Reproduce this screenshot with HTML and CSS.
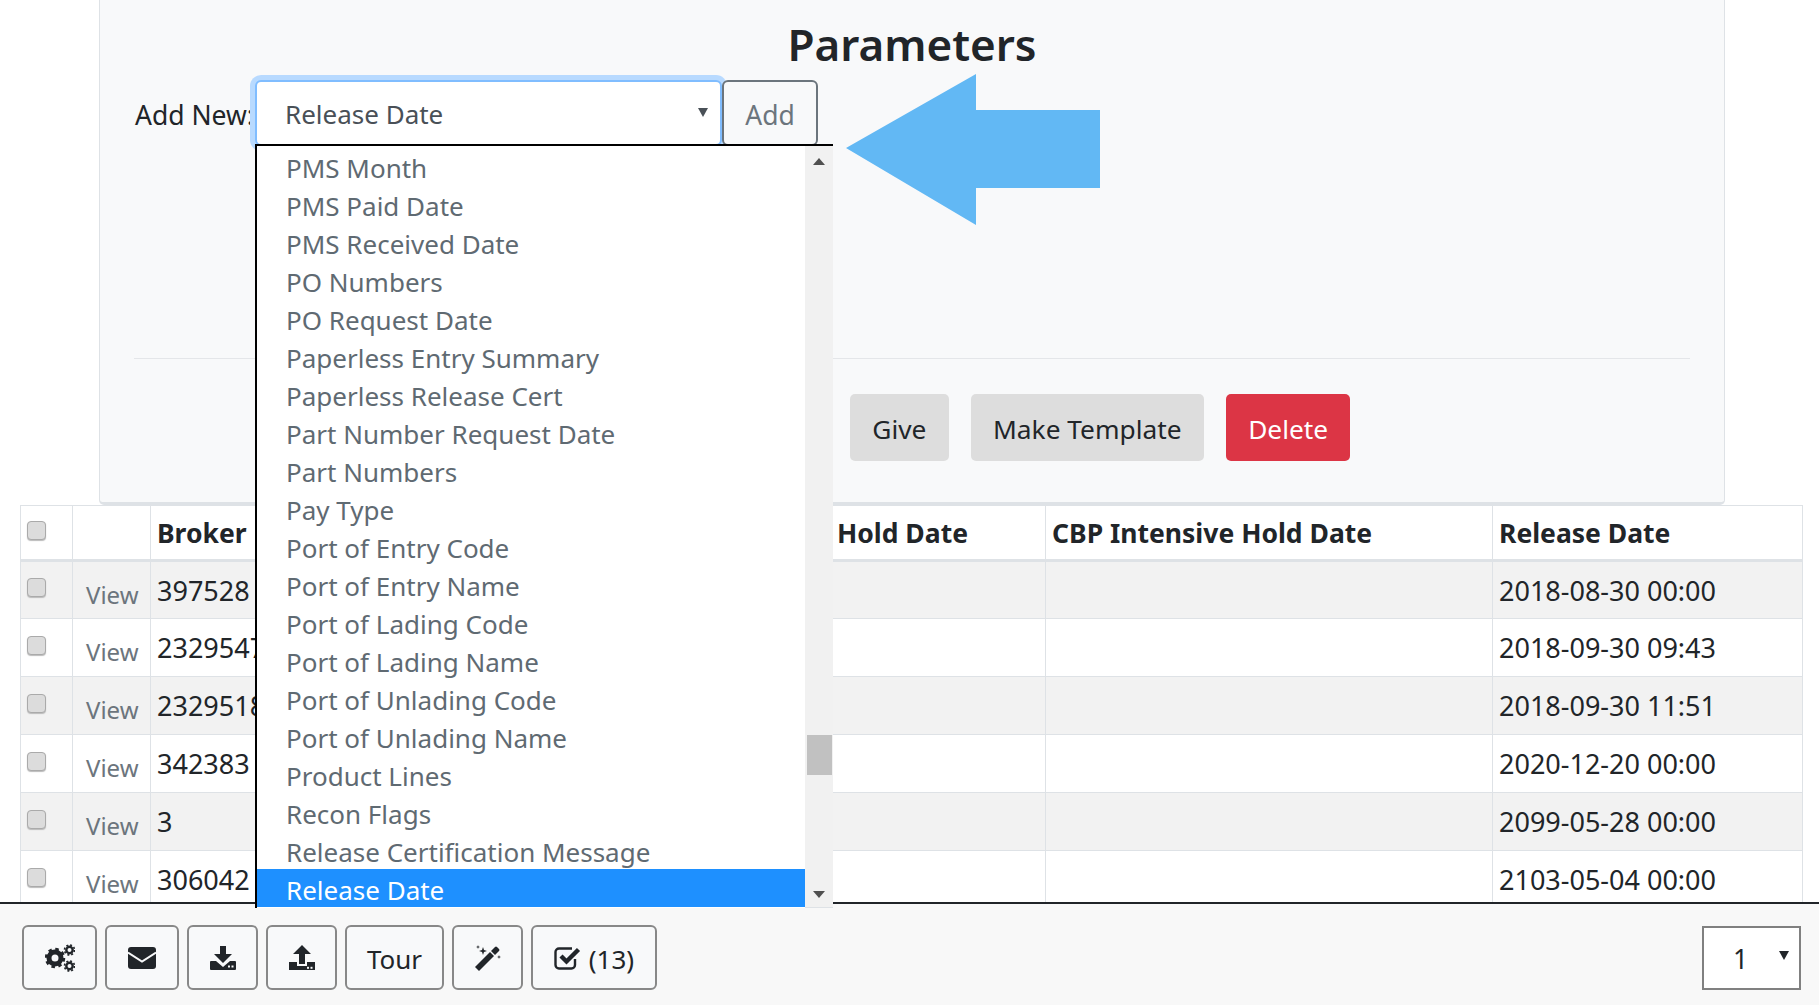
FILE: index.html
```html
<!DOCTYPE html>
<html>
<head>
<meta charset="UTF-8">
<title>Parameters</title>
<link rel="stylesheet" href="styles.css">
</head>
<body>
<div class="page">
  <div class="content">
    <div class="panel">
      <h2 class="panel-title">Parameters</h2>
      <div class="add-row">
        <label class="add-label">Add New:</label>
        <div class="select-box">Release Date<span class="select-arrow"></span></div>
        <button class="btn-add">Add</button>
      </div>
      <hr class="rule">
      <div class="actions">
        <button class="btn btn-grey">Give</button>
        <button class="btn btn-grey">Make Template</button>
        <button class="btn btn-red">Delete</button>
      </div>
    </div>

    <table class="grid">
      <colgroup>
        <col class="c-check"><col class="c-view"><col class="c-broker"><col class="c-hold"><col class="c-cbp"><col class="c-release">
      </colgroup>
      <thead>
        <tr>
          <th><input type="checkbox" class="tick"></th>
          <th></th>
          <th>Broker Reference</th>
          <th>Hold Date</th>
          <th>CBP Intensive Hold Date</th>
          <th>Release Date</th>
        </tr>
      </thead>
      <tbody>
        <tr><td><input type="checkbox" class="tick"></td><td class="view">View</td><td>397528</td><td></td><td></td><td>2018-08-30 00:00</td></tr>
        <tr><td><input type="checkbox" class="tick"></td><td class="view">View</td><td>2329547</td><td></td><td></td><td>2018-09-30 09:43</td></tr>
        <tr><td><input type="checkbox" class="tick"></td><td class="view">View</td><td>2329518</td><td></td><td></td><td>2018-09-30 11:51</td></tr>
        <tr><td><input type="checkbox" class="tick"></td><td class="view">View</td><td>342383</td><td></td><td></td><td>2020-12-20 00:00</td></tr>
        <tr><td><input type="checkbox" class="tick"></td><td class="view">View</td><td>3</td><td></td><td></td><td>2099-05-28 00:00</td></tr>
        <tr><td><input type="checkbox" class="tick"></td><td class="view">View</td><td>306042</td><td></td><td></td><td>2103-05-04 00:00</td></tr>
      </tbody>
    </table>
  </div>

  <div class="footer">
    <div class="tools">
      <button class="tool tool-gears">
        <svg width="30" height="28" viewBox="0 0 30 28">
          <circle cx="10" cy="14" r="6" fill="none" stroke="#212529" stroke-width="5"/>
          <circle cx="10" cy="14" r="9" fill="none" stroke="#212529" stroke-width="2.5" stroke-dasharray="3.5 3.57"/>
          <circle cx="24.5" cy="6" r="3.2" fill="none" stroke="#212529" stroke-width="2.4"/>
          <circle cx="24.5" cy="6" r="5" fill="none" stroke="#212529" stroke-width="1.6" stroke-dasharray="2 1.93"/>
          <circle cx="24.5" cy="22" r="3.2" fill="none" stroke="#212529" stroke-width="2.4"/>
          <circle cx="24.5" cy="22" r="5" fill="none" stroke="#212529" stroke-width="1.6" stroke-dasharray="2 1.93"/>
        </svg>
      </button>
      <button class="tool tool-mail">
        <svg width="28" height="22" viewBox="0 0 28 22">
          <rect width="28" height="22" rx="3" fill="#212529"/>
          <path d="M0 5.5 L14 14.5 L28 5.5" fill="none" stroke="#f8f9fa" stroke-width="2"/>
        </svg>
      </button>
      <button class="tool tool-down">
        <svg width="26" height="24" viewBox="0 0 26 24">
          <path d="M10 0 H16 V8 H22 L13 17 L4 8 H10 Z" fill="#212529"/>
          <path d="M1 15 H6 L13 21 L20 15 H25 A1 1 0 0 1 26 16 V23 A1 1 0 0 1 25 24 H1 A1 1 0 0 1 0 23 V16 A1 1 0 0 1 1 15 Z" fill="#212529"/>
          <rect x="18" y="19.5" width="2" height="2" fill="#f8f9fa"/><rect x="21.5" y="19.5" width="2" height="2" fill="#f8f9fa"/>
        </svg>
      </button>
      <button class="tool tool-up">
        <svg width="26" height="25" viewBox="0 0 26 25">
          <path d="M13 0 L22 9 H16 V19 H10 V9 H4 Z" fill="#212529"/>
          <path d="M0 17 H8 V21 H18 V17 H26 V25 H0 Z" fill="#212529"/>
          <rect x="18" y="21.8" width="2" height="2" fill="#f8f9fa"/><rect x="21.5" y="21.8" width="2" height="2" fill="#f8f9fa"/>
        </svg>
      </button>
      <button class="tool tool-tour">Tour</button>
      <button class="tool tool-magic">
        <svg width="26" height="26" viewBox="0 0 26 26">
          <path d="M0 22 L15 7 L19 11 L4 26 Z" fill="#212529"/>
          <path d="M16 6 L20 2 Q21 1 22 2 L24 4 Q25 5 24 6 L20 10 Z" fill="#212529"/>
          <path d="M8 2 L9 5 L12 6 L9 7 L8 10 L7 7 L4 6 L7 5 Z" fill="#212529"/>
          <path d="M3 0 L3.5 1.5 L5 2 L3.5 2.5 L3 4 L2.5 2.5 L1 2 L2.5 1.5 Z" fill="#212529"/>
          <path d="M24 10 L24.5 11.5 L26 12 L24.5 12.5 L24 14 L23.5 12.5 L22 12 L23.5 11.5 Z" fill="#212529"/>
        </svg>
      </button>
      <button class="tool tool-count">
        <svg width="27" height="24" viewBox="0 0 27 24">
          <path d="M21 13 V19 A3.5 3.5 0 0 1 17.5 22.5 H5 A3.5 3.5 0 0 1 1.5 19 V6 A3.5 3.5 0 0 1 5 2.5 H18" fill="none" stroke="#212529" stroke-width="2.4"/>
          <path d="M7 10 L12.5 15.5 L24.5 3.5" fill="none" stroke="#212529" stroke-width="4.4"/>
        </svg>
        <span class="count-text">(13)</span>
      </button>
    </div>
    <div class="pager">1<span class="pager-arrow"></span></div>
  </div>

  <div class="dropdown">
    <div class="dropdown-list">
      <div class="opt">PMS Month</div>
      <div class="opt">PMS Paid Date</div>
      <div class="opt">PMS Received Date</div>
      <div class="opt">PO Numbers</div>
      <div class="opt">PO Request Date</div>
      <div class="opt">Paperless Entry Summary</div>
      <div class="opt">Paperless Release Cert</div>
      <div class="opt">Part Number Request Date</div>
      <div class="opt">Part Numbers</div>
      <div class="opt">Pay Type</div>
      <div class="opt">Port of Entry Code</div>
      <div class="opt">Port of Entry Name</div>
      <div class="opt">Port of Lading Code</div>
      <div class="opt">Port of Lading Name</div>
      <div class="opt">Port of Unlading Code</div>
      <div class="opt">Port of Unlading Name</div>
      <div class="opt">Product Lines</div>
      <div class="opt">Recon Flags</div>
      <div class="opt">Release Certification Message</div>
      <div class="opt opt-on">Release Date</div>
    </div>
    <div class="scrollbar">
      <span class="scroll-up"></span>
      <span class="scroll-thumb"></span>
      <span class="scroll-down"></span>
    </div>
  </div>

  <svg class="big-arrow" width="254" height="151" viewBox="0 0 254 151">
    <polygon points="0,74 130,0 130,36 254,36 254,114 130,114 130,151" fill="#62b8f4"/>
  </svg>
</div>
</body>
</html>
```

FILE: styles.css
```css
html, body {margin: 0; height: 100%;}
body {font-family: "Noto Sans", sans-serif; font-size: 26.5px; color: #212529; overflow: hidden;}
button {font-family: inherit; font-size: inherit;}

.page {position: relative; display: flex; flex-direction: column; height: 100vh;}
.content {flex: none; box-sizing: border-box; height: 904px; overflow: hidden; border-bottom: 2px solid #212529;}

/* le panneau du haut */
.panel {box-sizing: border-box; width: 1626px; height: 505px; margin-left: 99px; padding: 0 34px; background: #f8f9fa; border: 1px solid #dee2e6; border-top: 0; border-bottom-width: 3px; border-radius: 0 0 5px 5px;}
.panel-title {margin: 0; height: 80px; line-height: 88px; text-align: center; font-size: 44px; font-weight: 600;}
.add-row {display: flex; align-items: center; height: 66px;}
.add-label {flex: none; box-sizing: border-box; width: 121px; padding: 4px 0 0 1px; white-space: nowrap;}
.select-box {position: relative; box-sizing: border-box; width: 467px; height: 66px; line-height: 65px; padding-left: 28px; font-size: 26px; background: #fff; color: #495057; border: 2px solid #80bdff; border-radius: 6px; box-shadow: 0 0 0 5px #b8daff;}
.select-arrow {position: absolute; right: 12px; top: 26px; border-left: 5px solid transparent; border-right: 5px solid transparent; border-top: 9px solid #495057;}
.btn-add {position: relative; box-sizing: border-box; width: 96px; height: 66px; padding: 3px 0 0; color: #6c757d; background: #f8f9fa; border: 2px solid #6c757d; border-radius: 6px;}
.rule {height: 1px; margin: 212px 0 0; border: 0; background: #e4e6e9;}
.actions {display: flex; gap: 22px; margin-top: 35px; padding-left: 716px;}
.btn {height: 67px; padding: 3px 22.3px 0; font-size: 26.3px; border: 0; border-radius: 5px;}
.btn-grey {background: #ddd; color: #212529;}
.btn-red {background: #dc3545; color: #fff;}

/* le tableau */
.grid {table-layout: fixed; width: 1782px; margin-left: 20px; border-collapse: collapse;}
.c-check {width: 52px;}
.c-view {width: 78px;}
.c-broker {width: 680px;}
.c-hold {width: 215px;}
.c-cbp {width: 447px;}
.c-release {width: 310px;}
.grid th, .grid td {box-sizing: border-box; padding: 0 6px; border: 1px solid #dee2e6; text-align: left; white-space: nowrap; overflow: hidden;}
.grid th {height: 55px; font-weight: 700; border-bottom-width: 3px;}
.grid td {height: 58px; font-size: 27px;}
.grid tbody tr:nth-child(odd) {background: #f2f2f2;}
.grid .view {color: #6c757d; font-size: 24px; padding: 8px 0 0 13px;}
.tick {appearance: none; display: block; box-sizing: border-box; width: 19px; height: 19px; margin: -5px 0 0 0; background: #dcdcdc; border: 1px solid #aaa; border-radius: 4px; box-shadow: 0 1px 1px #bbb;}

/* le pied de page */
.footer {flex: 1; display: flex; justify-content: space-between; align-items: flex-start; box-sizing: border-box; padding: 21px 18px 0 22px; background: #f8f8f8;}
.tools {display: flex; gap: 8px;}
.tool {display: flex; align-items: center; justify-content: center; gap: 8px; box-sizing: border-box; height: 65px; padding: 0; background: #f8f9fa; color: #212529; border: 2px solid #888; border-radius: 6px;}
.tool-gears {width: 75px;}
.tool-mail {width: 74px;}
.tool-down {width: 71px;}
.tool-up {width: 71px;}
.tool-tour {width: 99px; padding-top: 2px; font-size: 26px;}
.tool-magic {width: 71px;}
.tool-count {width: 126px;}
.count-text {padding-top: 2px; font-size: 26px;}
.pager {position: relative; box-sizing: border-box; width: 99px; height: 64px; margin-top: 1px; padding-left: 29px; line-height: 62px; background: #fff; border: 2px solid #808080;}
.pager-arrow {position: absolute; right: 10px; top: 23px; border-left: 5px solid transparent; border-right: 5px solid transparent; border-top: 9px solid #212529;}

/* la liste ouverte */
.dropdown {position: absolute; left: 255px; top: 144px; display: flex; box-sizing: border-box; width: 578px; height: 764px; background: #fff; border-top: 2px solid #000; border-left: 2px solid #000;}
.dropdown-list {flex: 1; padding-top: 1px; font-size: 26px; color: #5f6a72;}
.opt {box-sizing: border-box; height: 38px; padding: 5px 0 0 29px; line-height: 33px; white-space: nowrap;}
.opt-on {background: #1e90ff; color: #fff;}
.scrollbar {position: relative; box-sizing: border-box; width: 28px; background: #f1f1f1; border-bottom: 1px solid #dee2e6;}
.scroll-up {position: absolute; left: 8px; top: 12px; border-left: 6px solid transparent; border-right: 6px solid transparent; border-bottom: 7px solid #505050;}
.scroll-down {position: absolute; left: 8px; bottom: 9px; border-left: 6px solid transparent; border-right: 6px solid transparent; border-top: 7px solid #505050;}
.scroll-thumb {position: absolute; left: 2px; right: 1px; top: 589px; height: 40px; background: #c1c1c1;}

.big-arrow {position: absolute; left: 846px; top: 74px;}
```
